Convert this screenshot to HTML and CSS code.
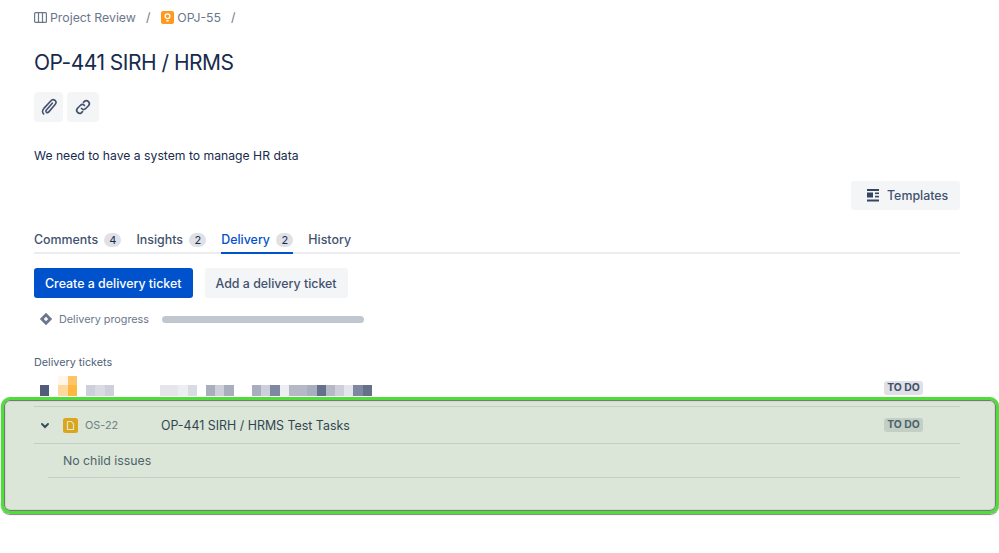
FILE: index.html
```html
<!DOCTYPE html>
<html lang="en">
<head>
    <meta charset="UTF-8">
    <title>OP-441 SIRH / HRMS</title>
    <link rel="stylesheet" href="styles.css">
</head>
<body>
    <div class="page">
        <nav class="crumbs">
            <svg class="crumb-board" width="13" height="11" viewBox="0 0 13 11" fill="none" stroke="#6b778c" stroke-width="1.200"><rect x=".6" y=".6" width="11.800" height="9.800" rx="1"/><path d="M4.500 .6v9.800M8.500 .6v9.800"/></svg>
            <span>Project Review</span>
            <span class="crumb-sep">/</span>
            <svg class="crumb-idea" width="13" height="13" viewBox="0 0 13 13"><rect width="13" height="13" rx="2" fill="#ff991f"/><circle cx="6.500" cy="5.200" r="2.400" fill="none" stroke="#fff" stroke-width="1.300"/><path d="M5.300 9.800h2.400" stroke="#fff" stroke-width="1.400"/></svg>
            <span>OPJ-55</span>
            <span class="crumb-sep">/</span>
        </nav>

        <h1>OP-441 SIRH / HRMS</h1>

        <div class="tools">
            <button class="tool tool-clip">
                <svg width="18" height="18" viewBox="0 0 18 18" fill="none" stroke="#42526e" stroke-width="1.600" stroke-linecap="round"><path d="M12.300 5.200 6.400 12c-.8.9-.6 1.800 0 2.300.6.500 1.600.5 2.400-.4l6.100-7.100c1.500-1.800 1.300-3.500.1-4.500-1.300-1.100-3-.8-4.500.9L3.900 10.400c-1.900 2.200-1.700 4.300-.3 5.500"/></svg>
            </button>
            <button class="tool tool-link">
                <svg width="18" height="18" viewBox="0 0 18 18" fill="none" stroke="#42526e" stroke-width="1.700" stroke-linecap="round"><path d="M7.500 10.500a3 3 0 0 0 4.200 0l3-3a3 3 0 0 0-4.200-4.200l-1 1"/><path d="M10.500 7.500a3 3 0 0 0-4.200 0l-3 3a3 3 0 0 0 4.200 4.200l1-1"/></svg>
            </button>
        </div>

        <p class="description">We need to have a system to manage HR data</p>

        <div class="templates-row">
            <button class="btn btn-templates">
                <svg width="14" height="13" viewBox="0 0 14 13" fill="#344563"><rect x="1" y="0" width="12" height="2"/><rect x="1" y="3.500" width="6" height="5"/><rect x="9" y="3.500" width="4" height="1.600"/><rect x="9" y="6.800" width="4" height="1.600"/><rect x="1" y="10.500" width="12" height="2"/></svg>
                Templates
            </button>
        </div>

        <div class="tabs">
            <div class="tab">Comments <span class="count">4</span></div>
            <div class="tab">Insights <span class="count">2</span></div>
            <div class="tab tab-active">Delivery <span class="count">2</span></div>
            <div class="tab">History</div>
        </div>

        <div class="actions">
            <button class="btn btn-primary">Create a delivery ticket</button>
            <button class="btn">Add a delivery ticket</button>
        </div>

        <div class="progress">
            <svg width="14" height="14" viewBox="0 0 14 14"><path d="M7 .8 13.200 7 7 13.200.8 7z" fill="#6b778c"/><path d="M7 4.800 9.200 7 7 9.200 4.800 7z" fill="#fff"/></svg>
            <span class="progress-label">Delivery progress</span>
            <div class="progress-bar"></div>
        </div>

        <div class="section-label">Delivery tickets</div>

        <div class="blurred-row">
            <div class="mosaic">
                <i></i><i></i><i class="o1"></i><i class="o2"></i><i></i><i></i><i></i><i></i><i></i><i></i><i></i><i></i><i></i><i></i><i></i><i></i><i></i><i></i><i></i><i></i><i></i><i></i><i></i><i></i><i></i><i></i><i></i><i></i><i></i><i></i><i></i><i></i><i></i><i></i><i></i><i></i>
                <i class="c9"></i><i></i><i class="o3"></i><i class="o4"></i><i></i><i class="c3"></i><i class="c2"></i><i class="c3"></i><i></i><i></i><i></i><i></i><i></i><i class="c1"></i><i class="c1"></i><i class="c0"></i><i class="c2"></i><i></i><i class="c5"></i><i class="c3"></i><i class="c5"></i><i></i><i></i><i class="c5"></i><i class="c3"></i><i class="c7"></i><i class="c0"></i><i class="c4"></i><i class="c4"></i><i class="c5"></i><i class="c8"></i><i class="c4"></i><i class="c3"></i><i class="c1"></i><i class="c7"></i><i class="c8"></i>
            </div>
            <span class="lozenge lozenge-blurred">TO DO</span>
        </div>

        <div class="ticket">
            <svg class="chevron" width="10" height="7" viewBox="0 0 10 7" fill="none" stroke="#253858" stroke-width="2" stroke-linecap="round"><path d="M2 2l3 3 3-3"/></svg>
            <svg class="ticket-icon" width="15" height="15" viewBox="0 0 15 15"><rect width="15" height="15" rx="2.500" fill="#ffab00"/><path d="M4.500 3.500h3.800L10.500 5.700v5.800h-6z" fill="none" stroke="#fff" stroke-width="1.200"/></svg>
            <span class="ticket-key">OS-22</span>
            <span class="ticket-title">OP-441 SIRH / HRMS Test Tasks</span>
            <span class="lozenge">TO DO</span>
        </div>
        <div class="no-child">No child issues</div>
    </div>

    <div class="highlight"></div>
</body>
</html>
```

FILE: styles.css
```css
:root {
    --text-color: #172b4d;
    --text-mid: #42526e;
    --text-light: #6b778c;
    --button-bg: #f4f5f7;
    --border-color: #dfe1e6;
    --primary-color: #0052cc;
}
html, body {
    margin: 0;
    height: 553px;
    overflow: hidden;
    background-color: #ffffff;
}
body {
    font-family: Inter, 'Noto Sans', sans-serif;
    color: var(--text-color);
    position: relative;
}
button {
    font-family: inherit;
    border: none;
    cursor: pointer;
}
.page {
    width: 926px;
    margin-left: 34px;
}
.crumbs {
    height: 34px;
    display: flex;
    align-items: center;
    font-size: 12.300px;
    color: var(--text-light);
}
.crumb-board {
    margin-right: 3px;
}
.crumb-sep {
    margin: 0 11px 0 10px;
}
.crumb-idea {
    margin-right: 3px;
}
h1 {
    margin: 11px 0 0;
    height: 36px;
    line-height: 35px;
    font-size: 21px;
    font-weight: 400;
    letter-spacing: -0.5px;
}
.tools {
    display: flex;
    gap: 4px;
    margin-top: 11px;
}
.tool {
    height: 30px;
    padding: 0;
    display: flex;
    align-items: center;
    justify-content: center;
    background-color: var(--button-bg);
    border-radius: 4px;
}
.tool-clip {
    width: 29px;
}
.tool-link {
    width: 32px;
}
.description {
    margin: 25px 0 0;
    height: 16px;
    line-height: 17px;
    font-size: 12.200px;
}
.templates-row {
    display: flex;
    justify-content: flex-end;
    margin-top: 18px;
}
.btn {
    height: 30px;
    padding: 0 11px;
    display: flex;
    align-items: center;
    background-color: var(--button-bg);
    border-radius: 3px;
    font-size: 12.400px;
    font-weight: 500;
    color: var(--text-mid);
}
.btn-templates {
    width: 109px;
    height: 29px;
    padding: 0 0 0 15px;
    gap: 7px;
}
.btn-primary {
    background-color: var(--primary-color);
    color: #ffffff;
}
.tabs {
    display: flex;
    gap: 15px;
    height: 44px;
    box-sizing: border-box;
    border-bottom: 2px solid #ebecf0;
}
.tab {
    height: 44px;
    box-sizing: border-box;
    padding-top: 22px;
    font-size: 12.400px;
    font-weight: 500;
    line-height: 16px;
    color: var(--text-mid);
    white-space: pre;
}
.tab-active {
    color: #0052cc;
    border-bottom: 2px solid #0052cc;
}
.count {
    display: inline-block;
    min-width: 17px;
    margin-left: 3px;
    height: 14px;
    line-height: 14px;
    border-radius: 7px;
    background-color: var(--border-color);
    font-size: 11px;
    font-weight: 400;
    text-align: center;
    color: var(--text-color);
}
.actions {
    display: flex;
    gap: 12px;
    margin-top: 14px;
}
.progress {
    display: flex;
    align-items: center;
    height: 16px;
    margin: 13px 0 0 5px;
}
.progress-label {
    margin-left: 6px;
    width: 103px;
    font-size: 10.800px;
    color: var(--text-light);
}
.progress-bar {
    width: 202px;
    height: 7px;
    border-radius: 4px;
    background-color: #c1c7d0;
}
.section-label {
    margin-top: 28px;
    height: 16px;
    line-height: 16px;
    font-size: 10.800px;
    color: #505f79;
}
.blurred-row {
    height: 30px;
    margin-top: 6px;
    display: flex;
    justify-content: space-between;
    border-bottom: 1px solid var(--border-color);
    box-sizing: border-box;
    padding-right: 37px;
}
.mosaic {
    margin-left: 6px;
    display: grid;
    grid-template-columns: repeat(36, 9.230px);
    grid-template-rows: 9px 11px;
    align-self: flex-start;
    margin-top: -1px;
}
.o1 { background-color: #fff5e8; }
.o2 { background-color: #ffc46b; }
.o3 { background-color: #fdd9a0; }
.o4 { background-color: #ffb83f; }
.c0 { background-color: #eceef2; }
.c1 { background-color: #e4e6ec; }
.c2 { background-color: #d9dbe3; }
.c3 { background-color: #cdd0da; }
.c4 { background-color: #b5b9c7; }
.c5 { background-color: #a9aebe; }
.c7 { background-color: #7f88a0; }
.c8 { background-color: #65708b; }
.c9 { background-color: #505c7a; }
.lozenge {
    width: 39px;
    height: 14px;
    line-height: 14px;
    border-radius: 3px;
    background-color: var(--border-color);
    font-size: 10.400px;
    font-weight: 700;
    text-align: center;
    color: var(--text-mid);
}
.lozenge-blurred {
    margin-top: 4px;
}
.ticket {
    height: 37px;
    display: flex;
    align-items: center;
    box-sizing: border-box;
    border-bottom: 1px solid var(--border-color);
    padding-right: 37px;
}
.chevron {
    margin-left: 6px;
}
.ticket-icon {
    margin-left: 13px;
}
.ticket-key {
    width: 76px;
    margin-left: 7px;
    font-size: 10.900px;
    color: var(--text-light);
}
.ticket-title {
    flex: 1;
    font-size: 12.400px;
}
.no-child {
    margin-left: 14px;
    height: 34px;
    line-height: 33px;
    box-sizing: border-box;
    padding-left: 15px;
    border-bottom: 1px solid var(--border-color);
    font-size: 12.300px;
    color: var(--text-mid);
}
.highlight {
    position: absolute;
    left: 1px;
    top: 397px;
    width: 998px;
    height: 117px;
    box-sizing: border-box;
    border: 3px solid #4fdd3a;
    border-radius: 9px;
    background-color: rgba(111, 151, 99, 0.25);
    box-shadow: inset 0 0 1px 1px rgba(50, 65, 50, 0.7), 0 1px 1px rgba(50, 50, 50, 0.6);
}
```
